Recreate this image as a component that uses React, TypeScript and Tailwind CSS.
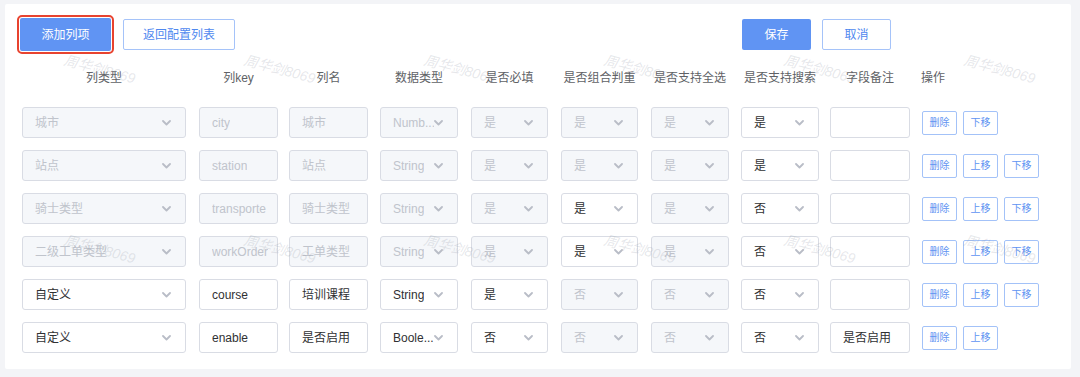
import React from "react";

type Cell =
  | { t: "sel"; v: string; d?: boolean }
  | { t: "in"; v: string; d?: boolean };

type Row = { cells: Cell[]; ops: string[] };

const widths = [164, 79, 79, 78, 77, 77, 78, 78, 80];

const rows: Row[] = [
  {
    cells: [
      { t: "sel", v: "城市", d: true },
      { t: "in", v: "city", d: true },
      { t: "in", v: "城市", d: true },
      { t: "sel", v: "Numb...", d: true },
      { t: "sel", v: "是", d: true },
      { t: "sel", v: "是", d: true },
      { t: "sel", v: "是", d: true },
      { t: "sel", v: "是" },
      { t: "in", v: "" },
    ],
    ops: ["删除", "下移"],
  },
  {
    cells: [
      { t: "sel", v: "站点", d: true },
      { t: "in", v: "station", d: true },
      { t: "in", v: "站点", d: true },
      { t: "sel", v: "String", d: true },
      { t: "sel", v: "是", d: true },
      { t: "sel", v: "是", d: true },
      { t: "sel", v: "是", d: true },
      { t: "sel", v: "是" },
      { t: "in", v: "" },
    ],
    ops: ["删除", "上移", "下移"],
  },
  {
    cells: [
      { t: "sel", v: "骑士类型", d: true },
      { t: "in", v: "transporte", d: true },
      { t: "in", v: "骑士类型", d: true },
      { t: "sel", v: "String", d: true },
      { t: "sel", v: "是", d: true },
      { t: "sel", v: "是" },
      { t: "sel", v: "是", d: true },
      { t: "sel", v: "否" },
      { t: "in", v: "" },
    ],
    ops: ["删除", "上移", "下移"],
  },
  {
    cells: [
      { t: "sel", v: "二级工单类型", d: true },
      { t: "in", v: "workOrder", d: true },
      { t: "in", v: "工单类型", d: true },
      { t: "sel", v: "String", d: true },
      { t: "sel", v: "是", d: true },
      { t: "sel", v: "是" },
      { t: "sel", v: "是", d: true },
      { t: "sel", v: "否" },
      { t: "in", v: "" },
    ],
    ops: ["删除", "上移", "下移"],
  },
  {
    cells: [
      { t: "sel", v: "自定义" },
      { t: "in", v: "course" },
      { t: "in", v: "培训课程" },
      { t: "sel", v: "String" },
      { t: "sel", v: "是" },
      { t: "sel", v: "否", d: true },
      { t: "sel", v: "否", d: true },
      { t: "sel", v: "否" },
      { t: "in", v: "" },
    ],
    ops: ["删除", "上移", "下移"],
  },
  {
    cells: [
      { t: "sel", v: "自定义" },
      { t: "in", v: "enable" },
      { t: "in", v: "是否启用" },
      { t: "sel", v: "Boole..." },
      { t: "sel", v: "否" },
      { t: "sel", v: "否", d: true },
      { t: "sel", v: "否", d: true },
      { t: "sel", v: "否" },
      { t: "in", v: "是否启用" },
    ],
    ops: ["删除", "上移"],
  },
];

const headers = [
  "列类型",
  "列key",
  "列名",
  "数据类型",
  "是否必填",
  "是否组合判重",
  "是否支持全选",
  "是否支持搜索",
  "字段备注",
];

function Chevron() {
  return (
    <svg width="9" height="6" viewBox="0 0 9 6" className="shrink-0">
      <polyline
        points="1,1 4.5,4.5 8,1"
        fill="none"
        stroke="#b9bdc7"
        strokeWidth="1.8"
        strokeLinecap="round"
        strokeLinejoin="round"
      />
    </svg>
  );
}

function Control({ cell, w }: { cell: Cell; w: number }) {
  const base = cell.d
    ? "bg-[#f5f7fa] text-[#c0c4cc]"
    : "bg-white text-[#303133]";
  return (
    <div
      className={`h-[31px] border border-[#d9dce4] rounded-[3px] flex items-center justify-between pl-[12px] text-[12px] whitespace-nowrap overflow-hidden ${base} ${
        cell.t === "sel" ? "pr-[14px]" : "pr-[4px]"
      }`}
      style={{ width: w }}
    >
      <span className="overflow-hidden">{cell.v}</span>
      {cell.t === "sel" && <Chevron />}
    </div>
  );
}

function OpBtn({ label }: { label: string }) {
  return (
    <div className="w-[35px] h-[24px] border border-[#a3c2f8] rounded-[2px] flex items-center justify-center text-[10px] text-[#5f94f2] bg-white">
      {label}
    </div>
  );
}

const gridCols =
  "grid grid-cols-[177px_90px_91px_91px_90px_90px_90px_89px_92px_1fr]";

const marks: { x: number; y: number }[] = [];
for (const y of [46, 226]) {
  for (let k = 0; k < 6; k++) marks.push({ x: 62 + 180 * k, y });
}

export default function App() {
  return (
    <div className="w-[1080px] h-[377px] bg-[#f3f4f7] pl-[5px] pt-[4px] font-[family-name:'Liberation_Sans','Noto_Sans_CJK_SC',sans-serif]">
      <div className="relative w-[1066px] h-[365px] bg-white rounded-[2px] overflow-hidden">
        {/* top bar */}
        <div className="flex items-center pt-[11px] pl-[12px]">
          <div className="w-[97px] h-[39px] border-2 border-[#e8432f] rounded-[5px] p-[1px]">
            <div className="w-full h-full bg-[#6094f3] rounded-[2px] flex items-center justify-center text-white text-[12px]">
              添加列项
            </div>
          </div>
          <div className="ml-[9px] w-[112px] h-[31px] border border-[#a5c3f9] rounded-[2px] flex items-center justify-center text-[#4f88ef] text-[12px]">
            返回配置列表
          </div>
          <div className="ml-[507px] w-[69px] h-[31px] bg-[#6094f3] rounded-[2px] flex items-center justify-center text-white text-[12px]">
            保存
          </div>
          <div className="ml-[11px] w-[69px] h-[31px] border border-[#a5c3f9] rounded-[2px] flex items-center justify-center text-[#4f88ef] text-[12px]">
            取消
          </div>
        </div>

        {/* header */}
        <div className={`${gridCols} pl-[17px] mt-[9px] h-[30px] items-center`}>
          {headers.map((h, i) => (
            <div
              key={h}
              className="text-center text-[12px] text-[#606266]"
              style={{ width: widths[i] }}
            >
              {h}
            </div>
          ))}
          <div className="text-[12px] text-[#606266] -ml-[1px]">操作</div>
        </div>

        {/* rows */}
        <div className="flex flex-col gap-[12px] mt-[14px] pl-[17px]">
          {rows.map((r, ri) => (
            <div key={ri} className={`${gridCols} items-center h-[31px]`}>
              {r.cells.map((c, ci) => (
                <Control key={ci} cell={c} w={widths[ci]} />
              ))}
              <div className="flex gap-[6px]">
                {r.ops.map((o, oi) => (
                  <OpBtn key={oi} label={o} />
                ))}
              </div>
            </div>
          ))}
        </div>

        {/* watermarks */}
        <div className="pointer-events-none absolute inset-0">
          {marks.map((m, i) => (
            <div
              key={i}
              className="absolute italic text-[14px] text-[rgba(140,146,160,0.22)] rotate-[15deg] origin-top-left whitespace-nowrap"
              style={{ left: m.x, top: m.y }}
            >
              周华剑8069
            </div>
          ))}
        </div>
      </div>
    </div>
  );
}
